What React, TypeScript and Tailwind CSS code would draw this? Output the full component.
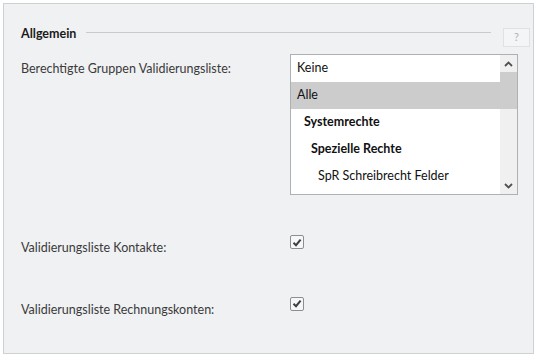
const font = { fontFamily: 'Lato, "Noto Sans", sans-serif' };

type Item = { label: string; indent: string; bold?: boolean; selected?: boolean };

const items: Item[] = [
  { label: "Keine", indent: "pl-[6px]" },
  { label: "Alle", indent: "pl-[6px]", selected: true },
  { label: "Systemrechte", indent: "pl-[13px]", bold: true },
  { label: "Spezielle Rechte", indent: "pl-[20px]", bold: true },
  { label: "SpR Schreibrecht Felder", indent: "pl-[27px]" },
];

function Check() {
  return (
    <div className="w-[14px] h-[14px] border border-[#8c8f8f] rounded-[2px] bg-[#f7f7f7] flex items-center justify-center">
      <svg width="10" height="9" viewBox="0 0 10 9">
        <path d="M1.5 4.8 L4 7.2 L8.6 1.6" fill="none" stroke="#3c3f40" strokeWidth="2" />
      </svg>
    </div>
  );
}

export default function App() {
  return (
    <div className="bg-white w-[537px] h-[357px] p-[3px]" style={font}>
      <div className="w-[531px] h-[351px] border border-[#cdd1d1] bg-[#f0f1f3] text-[12.5px] text-[#333]">
        <div className="flex items-center h-[22px] mt-[19px] pl-[17px] pr-[3px]">
          <span className="font-bold text-[#1a1a1a]">Allgemein</span>
          <div className="flex-1 h-px bg-[#c8cbcb] ml-[10px] mr-[12px] -mt-[3px]" />
          <div className="w-[27px] h-[19px] mt-[6px] border border-[#dfe1e2] bg-[#f4f5f6] text-[#b0b3b3] text-[11px] flex items-center justify-center">
            ?
          </div>
        </div>
        <div className="flex mt-[9px] pl-[17px]">
          <div className="w-[269px] pt-[6px] text-[#3a3a3a]">Berechtigte Gruppen Validierungsliste:</div>
          <div className="w-[228px] h-[141px] border border-[#aeb1b3] bg-white flex">
            <div className="flex-1 flex flex-col">
              {items.map((it) => (
                <div
                  key={it.label}
                  className={`h-[27px] shrink-0 flex items-center ${it.indent} ${it.selected ? "bg-[#cccccc]" : ""} ${it.bold ? "font-bold" : ""} text-[#111]`}
                >
                  {it.label}
                </div>
              ))}
            </div>
            <div className="w-[17px] bg-[#f0f0f0] flex flex-col">
              <div className="h-[17px] flex items-center justify-center">
                <svg width="9" height="6" viewBox="0 0 9 6">
                  <path d="M1 5 L4.5 1.5 L8 5" fill="none" stroke="#505050" strokeWidth="1.8" />
                </svg>
              </div>
              <div className="h-[37px] bg-[#cdcdcd]" />
              <div className="flex-1" />
              <div className="h-[17px] flex items-center justify-center">
                <svg width="9" height="6" viewBox="0 0 9 6">
                  <path d="M1 1 L4.5 4.5 L8 1" fill="none" stroke="#505050" strokeWidth="1.8" />
                </svg>
              </div>
            </div>
          </div>
        </div>
        <div className="flex items-start mt-[40px] pl-[17px]">
          <div className="w-[269px] pt-[4px] text-[#3a3a3a]">Validierungsliste Kontakte:</div>
          <Check />
        </div>
        <div className="flex items-start mt-[39px] pl-[17px]">
          <div className="w-[269px] pt-[4px] text-[#3a3a3a]">Validierungsliste Rechnungskonten:</div>
          <Check />
        </div>
      </div>
    </div>
  );
}
